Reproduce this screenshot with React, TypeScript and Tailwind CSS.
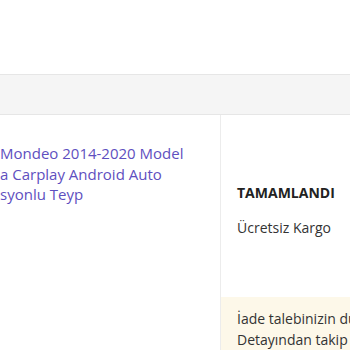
export default function App() {
  return (
    <div className="h-[350px] w-[350px] overflow-hidden bg-white font-['Open_Sans',sans-serif]">
      <div className="h-[74px]" />
      <div className="h-[41px] border-y border-[#e6e6e6] bg-[#f5f5f5]" />
      <div className="flex">
        <div className="w-[221px] shrink-0 border-r border-[#ececec] pt-[28px] text-[15px] leading-[20.5px] text-[#5e4fc0]">
          <div className="whitespace-nowrap">Mondeo 2014-2020 Model</div>
          <div className="whitespace-nowrap">a Carplay Android Auto</div>
          <div className="whitespace-nowrap">syonlu Teyp</div>
        </div>
        <div className="min-w-0 flex-1">
          <div className="px-4 pt-[68px] text-[14px] text-[#222]">
            <div className="font-bold leading-[20px]">TAMAMLANDI</div>
            <div className="mt-[15px] leading-[20px] text-[#333]">Ücretsiz Kargo</div>
          </div>
          <div className="mt-[59px] bg-[#fdf8e9] px-4 pt-[11px] text-[14px] leading-[21px] text-[#333] whitespace-nowrap">
            <div>İade talebinizin durumunu</div>
            <div>Detayından takip edebilirsiniz.</div>
          </div>
        </div>
      </div>
    </div>
  );
}
